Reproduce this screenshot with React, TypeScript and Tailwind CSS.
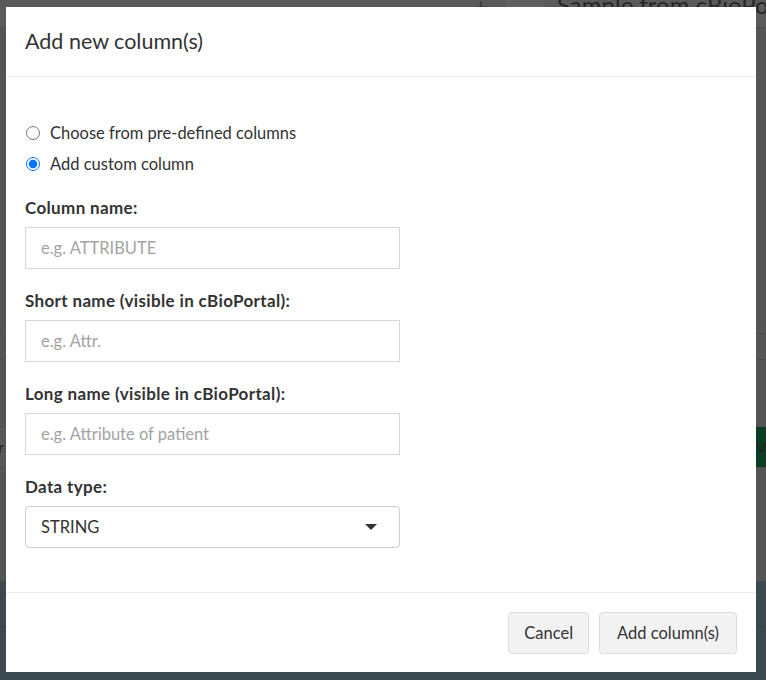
import { useState } from 'react';

const FONT = { fontFamily: 'Lato, "Open Sans", sans-serif' };

type FieldProps = {
  label: string;
  placeholder: string;
};

function TextField({ label, placeholder }: FieldProps) {
  return (
    <div className="flex flex-col">
      <label className="h-6 text-[17px] font-bold leading-6 tracking-[0.35px] text-[#333]">{label}</label>
      <input
        className="mt-[7px] h-[42px] w-[375px] border border-[#d6d6d6] pl-[15px] text-[16.5px] text-[#333] outline-none placeholder:text-[#a3a3a3]"
        placeholder={placeholder}
      />
    </div>
  );
}

// Backdrop: the page behind the modal, already dimmed
function Backdrop() {
  return (
    <div className="flex h-[680px] flex-col bg-[#555555]">
      <div className="flex h-[28px] items-start overflow-hidden border-b border-[#4c4c4c] bg-[#5a5a5a]">
        <div className="w-[474px] shrink-0" />
        <div className="-mt-[12px] w-[32px] shrink-0 text-[24px] text-[#3a3a3a]">+</div>
        <div className="h-full w-[38px] shrink-0 bg-[#606060]" />
        <div className="-mt-[13px] ml-[13px] shrink-0 whitespace-nowrap text-[24px] text-[#262626]">Sample from cBioPortal</div>
      </div>
      <div className="flex flex-1 flex-col">
        <div className="h-[306px] border-b border-[#4d4d4d]" />
        <div className="h-[26px] border-b border-[#4d4d4d]" />
        <div className="h-[66px]" />
        <div className="flex h-[42px] items-center justify-between border-y border-[#4d4d4d] bg-[#585858]">
          <span className="-ml-[2px] text-[16px] text-[#222]">r</span>
          <span className="flex h-full w-[10px] items-center bg-[#0b3d23] text-[16px] text-[#222]">V</span>
        </div>
      </div>
      <div className="flex h-[99px] flex-col bg-[#3c4a50]">
        <div className="h-[46px] border-b border-[#34413f]" />
      </div>
    </div>
  );
}

export default function App() {
  const [mode, setMode] = useState<'predefined' | 'custom'>('custom');

  return (
    <div className="relative h-[680px] w-[766px] overflow-hidden" style={FONT}>
      <Backdrop />

      {/* Modal */}
      <div className="absolute left-[6px] top-[7px] flex h-[665px] w-[750px] flex-col bg-white text-[#333]">
        <div className="flex h-[70px] items-center border-b border-[#ececec] px-[19px]">
          <h4 className="text-[21.5px] font-normal text-[#333]">Add new column(s)</h4>
        </div>

        <div className="flex flex-1 flex-col px-[19px] pt-[44px]">
          <div className="flex flex-col gap-[7px]">
            <label className="flex h-6 items-center gap-[10px] text-[16.5px] text-[#333]">
              <input
                type="radio"
                name="mode"
                className="ml-[1px] h-[14px] w-[14px]"
                checked={mode === 'predefined'}
                onChange={() => setMode('predefined')}
              />
              Choose from pre-defined columns
            </label>
            <label className="flex h-6 items-center gap-[10px] text-[16.5px] text-[#333]">
              <input
                type="radio"
                name="mode"
                className="ml-[1px] h-[14px] w-[14px]"
                checked={mode === 'custom'}
                onChange={() => setMode('custom')}
              />
              Add custom column
            </label>
          </div>

          <div className="mt-[20px] flex flex-col gap-[20px]">
            <TextField label="Column name:" placeholder="e.g. ATTRIBUTE" />
            <TextField label="Short name (visible in cBioPortal):" placeholder="e.g. Attr." />
            <TextField label="Long name (visible in cBioPortal):" placeholder="e.g. Attribute of patient" />
            <div className="flex flex-col">
              <label className="h-6 text-[17px] font-bold leading-6 tracking-[0.35px] text-[#333]">Data type:</label>
              <div className="mt-[7px] flex h-[42px] w-[375px] items-center justify-between rounded-[4px] border border-[#cccccc] pl-[15px] pr-[22px] text-[16.5px] text-[#333]">
                <span>STRING</span>
                <svg width="12" height="6" viewBox="0 0 12 6">
                  <path d="M0 0h12L6 6z" fill="#333" />
                </svg>
              </div>
            </div>
          </div>
        </div>

        <div className="flex h-[80px] items-start justify-end gap-[10px] border-t border-[#ececec] px-[19px] pt-[19px]">
          <button className="h-[42px] rounded-[4px] border border-[#dddddd] bg-[#f2f2f2] px-[15px] text-[16.5px] text-[#333]">
            Cancel
          </button>
          <button className="h-[42px] rounded-[4px] border border-[#dddddd] bg-[#f2f2f2] px-[17px] text-[16.5px] text-[#333]">
            Add column(s)
          </button>
        </div>
      </div>
    </div>
  );
}
